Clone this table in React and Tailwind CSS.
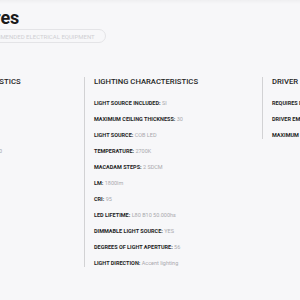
import React from "react";

const lighting = [
  ["LIGHT SOURCE INCLUDED:", "SI"],
  ["MAXIMUM CEILING THICKNESS:", "30"],
  ["LIGHT SOURCE:", "COB LED"],
  ["TEMPERATURE:", "2700K"],
  ["MACADAM STEPS:", "2 SDCM"],
  ["LM:", "1800lm"],
  ["CRI:", "95"],
  ["LED LIFETIME:", "L80 B10 50.000hs"],
  ["DIMMABLE LIGHT SOURCE:", "YES"],
  ["DEGREES OF LIGHT APERTURE:", "56"],
  ["LIGHT DIRECTION:", "Accent lighting"],
];

const general = [
  ["MATERIAL:", "Aluminium"],
  ["FINISH:", "White"],
  ["IP:", "IP20"],
  ["CEILING CUT-OUT DIAMETER:", "Ø 80"],
];

const driver = [
  ["REQUIRES DRIVER:", "YES"],
  ["DRIVER EMBEDDED:", "NO"],
  ["MAXIMUM DRIVER DISTANCE:", "10m"],
];

function Column({ title, rows, first }) {
  return (
    <div className={`w-[178px] shrink-0 flex flex-col pl-[9px] ${first ? "" : "border-l border-[#d2d2d4]"}`}>
      <h3 className="text-[7.7px] leading-[10px] font-medium text-[#1f1f1f] whitespace-nowrap">{title}</h3>
      <ul className="mt-[12px] flex flex-col gap-[8px]">
        {rows.map(([k, v]) => (
          <li key={k} className="text-[5.5px] leading-[8px] whitespace-nowrap">
            <span className="font-bold text-[#1f1f1f]">{k}</span>{" "}
            <span className="text-[#a9a9ad]">{v}</span>
          </li>
        ))}
      </ul>
    </div>
  );
}

export default function App() {
  return (
    <div className="w-[300px] h-[300px] overflow-hidden bg-[#f7f7f9] font-['Roboto',sans-serif] relative">
      <div className="absolute top-0 left-0 right-0 h-[4px] bg-gradient-to-b from-[#efeff1] to-[#f7f7f9]" />
      <div className="ml-[-94px] w-[640px] relative">
        <div className="pt-[8px] pl-[10px] flex flex-col items-start">
          <div className="ml-[38px] text-[18px] leading-[20px] font-bold text-[#1a1a1a] whitespace-nowrap">Fixtures</div>
          <div className="mt-[1px] ml-[53px] flex items-center h-[14px] px-[10px] rounded-full border border-[#e4e4e7] text-[6px] text-[#cfcfd3] uppercase whitespace-nowrap">
            Recommended electrical equipment
          </div>
        </div>
        <div className="mt-[34px] flex items-start">
          <Column title="PHYSICAL CHARACTERISTICS" rows={general} first />
          <Column title="LIGHTING CHARACTERISTICS" rows={lighting} />
          <Column title="DRIVER" rows={driver} />
        </div>
      </div>
    </div>
  );
}
